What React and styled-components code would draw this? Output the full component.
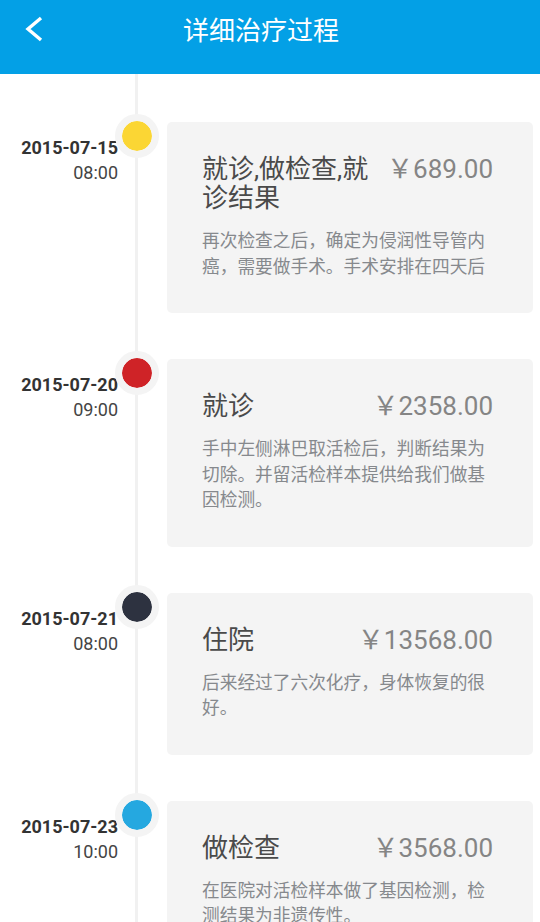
import React from "react";
import styled, { createGlobalStyle } from "styled-components";

const records = [
  {
    date: "2015-07-15",
    time: "08:00",
    color: "#fbd634",
    title: "就诊,做检查,就诊结果",
    price: "689.00",
    desc: "再次检查之后，确定为侵润性导管内癌，需要做手术。手术安排在四天后",
  },
  {
    date: "2015-07-20",
    time: "09:00",
    color: "#cf2327",
    title: "就诊",
    price: "2358.00",
    desc: "手中左侧淋巴取活检后，判断结果为切除。并留活检样本提供给我们做基因检测。",
  },
  {
    date: "2015-07-21",
    time: "08:00",
    color: "#2d3240",
    title: "住院",
    price: "13568.00",
    desc: "后来经过了六次化疗，身体恢复的很好。",
  },
  {
    date: "2015-07-23",
    time: "10:00",
    color: "#25a8e0",
    title: "做检查",
    price: "3568.00",
    desc: "在医院对活检样本做了基因检测，检测结果为非遗传性。",
  },
];

const GlobalStyle = createGlobalStyle`
  body {
    margin: 0;
    background: #fff;
    font-family: Roboto, "Noto Sans CJK SC", sans-serif;
  }
  * {
    box-sizing: border-box;
  }
`;

const Page = styled.div`
  width: 540px;
  min-height: 922px;
  background: #fff;
`;

const Header = styled.header`
  height: 74px;
  background: #03a0e6;
  display: flex;
  align-items: flex-start;
  padding-right: 78px;
`;

const BackButton = styled.button`
  width: 60px;
  height: 58px;
  border: none;
  background: transparent;
  padding: 0 0 0 25px;
  display: flex;
  align-items: center;
  cursor: pointer;
`;

const Title = styled.h1`
  flex: 1;
  margin: 0;
  height: 58px;
  line-height: 58px;
  text-align: center;
  color: #fff;
  font-weight: 400;
  font-size: 26px;
  font-family: "Noto Sans CJK SC", sans-serif;
`;

const Timeline = styled.div`
  padding: 48px 7px 60px 0;
  display: flex;
  flex-direction: column;
  gap: 46px;
  background: linear-gradient(#f1f1f1, #f1f1f1) no-repeat 135px 0 / 3px 100%;
`;

const Row = styled.div`
  display: flex;
  align-items: flex-start;
`;

const When = styled.div`
  width: 118px;
  padding-top: 13px;
  text-align: right;
  font-family: Roboto, sans-serif;
  font-size: 18px;
  line-height: 25px;
`;

const Day = styled.div`
  font-weight: 700;
  color: #333;
`;

const Time = styled.div`
  color: #444;
`;

const Axis = styled.div`
  width: 37px;
  display: flex;
  justify-content: center;
`;

const Dot = styled.span`
  flex: none;
  width: 44px;
  height: 44px;
  margin-top: -8px;
  border-radius: 50%;
  border: 7px solid #f4f4f4;
  background: ${(p) => p.$color};
  background-clip: padding-box;
`;

const Card = styled.div`
  flex: 1;
  margin-left: 12px;
  background: #f4f4f4;
  border-radius: 5px;
  padding: 33px 40px 35px 35px;
`;

const CardHead = styled.div`
  display: flex;
  align-items: flex-start;
  gap: 14px;
`;

const Name = styled.div`
  flex: 1;
  color: #4a4a4a;
  font-size: 26px;
  line-height: 29px;
  font-family: Roboto, "Noto Sans CJK SC", sans-serif;
`;

const Price = styled.div`
  flex: none;
  color: #858585;
  font-size: 26px;
  line-height: 29px;
  font-family: Roboto, "Noto Sans CJK SC", sans-serif;
`;

const Desc = styled.p`
  margin: 14px 0 0;
  color: #86898d;
  font-size: 17.7px;
  line-height: 25.5px;
  font-family: "Noto Sans CJK SC", sans-serif;
`;

const ChevronLeft = () => (
  <svg width="18" height="26" viewBox="0 0 18 26">
    <polyline
      points="16,2 3,13 16,24"
      fill="none"
      stroke="#fff"
      strokeWidth="3.4"
      strokeLinecap="butt"
      strokeLinejoin="miter"
    />
  </svg>
);

export default function App() {
  return (
    <>
      <GlobalStyle />
      <Page>
        <Header>
          <BackButton aria-label="返回">
            <ChevronLeft />
          </BackButton>
          <Title>详细治疗过程</Title>
        </Header>
        <Timeline>
          {records.map((r) => (
            <Row key={r.date}>
              <When>
                <Day>{r.date}</Day>
                <Time>{r.time}</Time>
              </When>
              <Axis>
                <Dot $color={r.color} />
              </Axis>
              <Card>
                <CardHead>
                  <Name>{r.title}</Name>
                  <Price>￥{r.price}</Price>
                </CardHead>
                <Desc>{r.desc}</Desc>
              </Card>
            </Row>
          ))}
        </Timeline>
      </Page>
    </>
  );
}
